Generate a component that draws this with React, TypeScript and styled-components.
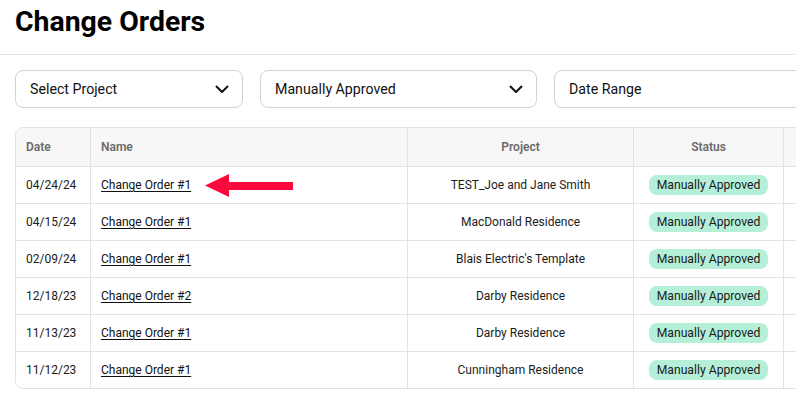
import styled, { createGlobalStyle } from 'styled-components';

const GlobalStyle = createGlobalStyle`
    html, body {
        margin: 0;
        padding: 0;
        background: #fff;
        overflow: hidden;
    }
    body {
        font-family: Roboto, "Liberation Sans", Arial, sans-serif;
        color: #1f1f1f;
    }
`

const Page = styled.div`
    width: 796px;
    height: 403px;
    overflow: hidden;
`

const Header = styled.header`
    height: 55px;
    border-bottom: 1px solid #e4e4e4;
    padding: 0 15px;
    box-sizing: border-box;
    display: flex;
    align-items: center;
`

const Title = styled.h1`
    margin: 0;
    margin-top: -11px;
    font-size: 28.4px;
    font-weight: 700;
    color: #000;
`

const Filters = styled.div`
    display: flex;
    gap: 17px;
    padding: 15px 15px 0;
    white-space: nowrap;
`

const Select = styled.div<{ $w: number }>`
    flex: 0 0 ${p => p.$w}px;
    height: 38px;
    box-sizing: border-box;
    border: 1px solid #d3d3d3;
    border-radius: 8px;
    padding: 0 13px 0 14px;
    display: flex;
    align-items: center;
    justify-content: space-between;
    font-size: 14.2px;
    color: #111;
    svg{
        flex: none;
    }
`

const Table = styled.div`
    margin: 19px 0 0 15px;
    width: 900px;
    border: 1px solid #e2e2e2;
    border-radius: 8px;
    overflow: hidden;
`

const Row = styled.div<{ $head?: boolean }>`
    display: grid;
    grid-template-columns: 74px 317px 226px 150px 1fr;
    height: ${p => p.$head ? 38 : 37}px;
    background: ${p => p.$head ? '#f7f7f7' : '#fff'};
    border-top: ${p => p.$head ? 'none' : '1px solid #e2e2e2'};
    box-sizing: border-box;
    font-size: 12px;
    font-weight: ${p => p.$head ? 600 : 400};
    color: ${p => p.$head ? '#6a6a6a' : '#1c1c1c'};
`

const Cell = styled.div<{ $center?: boolean }>`
    display: flex;
    align-items: center;
    justify-content: ${p => p.$center ? 'center' : 'flex-start'};
    padding: 0 10px;
    border-left: 1px solid #e2e2e2;
    position: relative;
    &:first-child{
        border-left: none;
    }
`

const NameLink = styled.a`
    color: #111;
    text-decoration: underline;
    text-underline-offset: 2px;
    font-size: 12px;
`

const Badge = styled.span`
    background: #b5efd8;
    color: #1a1a1a;
    border-radius: 8px;
    height: 20px;
    padding: 0 8px;
    display: inline-flex;
    align-items: center;
    font-size: 12.2px;
`

const Pointer = styled.svg`
    position: absolute;
    left: 114px;
    top: 6px;
`

const Chevron = () => (
    <svg width="14" height="9" viewBox="0 0 14 9">
        <path d="M1.5 1.5 L7 7 L12.5 1.5" fill="none" stroke="#111" strokeWidth="2" strokeLinecap="round" strokeLinejoin="round" />
    </svg>
)

const rows = [
    { date: '04/24/24', name: 'Change Order #1', project: 'TEST_Joe and Jane Smith' },
    { date: '04/15/24', name: 'Change Order #1', project: 'MacDonald Residence' },
    { date: '02/09/24', name: 'Change Order #1', project: "Blais Electric's Template" },
    { date: '12/18/23', name: 'Change Order #2', project: 'Darby Residence' },
    { date: '11/13/23', name: 'Change Order #1', project: 'Darby Residence' },
    { date: '11/12/23', name: 'Change Order #1', project: 'Cunningham Residence' },
]

function App(){
    return(
        <Page>
            <GlobalStyle />
            <Header>
                <Title>Change Orders</Title>
            </Header>
            <Filters>
                <Select $w={228}>Select Project<Chevron /></Select>
                <Select $w={277}>Manually Approved<Chevron /></Select>
                <Select $w={300}>Date Range</Select>
            </Filters>
            <Table>
                <Row $head>
                    <Cell>Date</Cell>
                    <Cell>Name</Cell>
                    <Cell $center>Project</Cell>
                    <Cell $center>Status</Cell>
                    <Cell></Cell>
                </Row>
                {rows.map((r, i) => (
                    <Row key={i}>
                        <Cell>{r.date}</Cell>
                        <Cell>
                            <NameLink href="#">{r.name}</NameLink>
                            {i === 0 && (
                                <Pointer width="90" height="26" viewBox="0 0 90 26">
                                    <polygon points="0,12.5 24,1 24,9 88,9 88,17 24,17 24,24" fill="#fc0a3e" />
                                </Pointer>
                            )}
                        </Cell>
                        <Cell $center>{r.project}</Cell>
                        <Cell $center><Badge>Manually Approved</Badge></Cell>
                        <Cell></Cell>
                    </Row>
                ))}
            </Table>
        </Page>
    )
}

export default App;
